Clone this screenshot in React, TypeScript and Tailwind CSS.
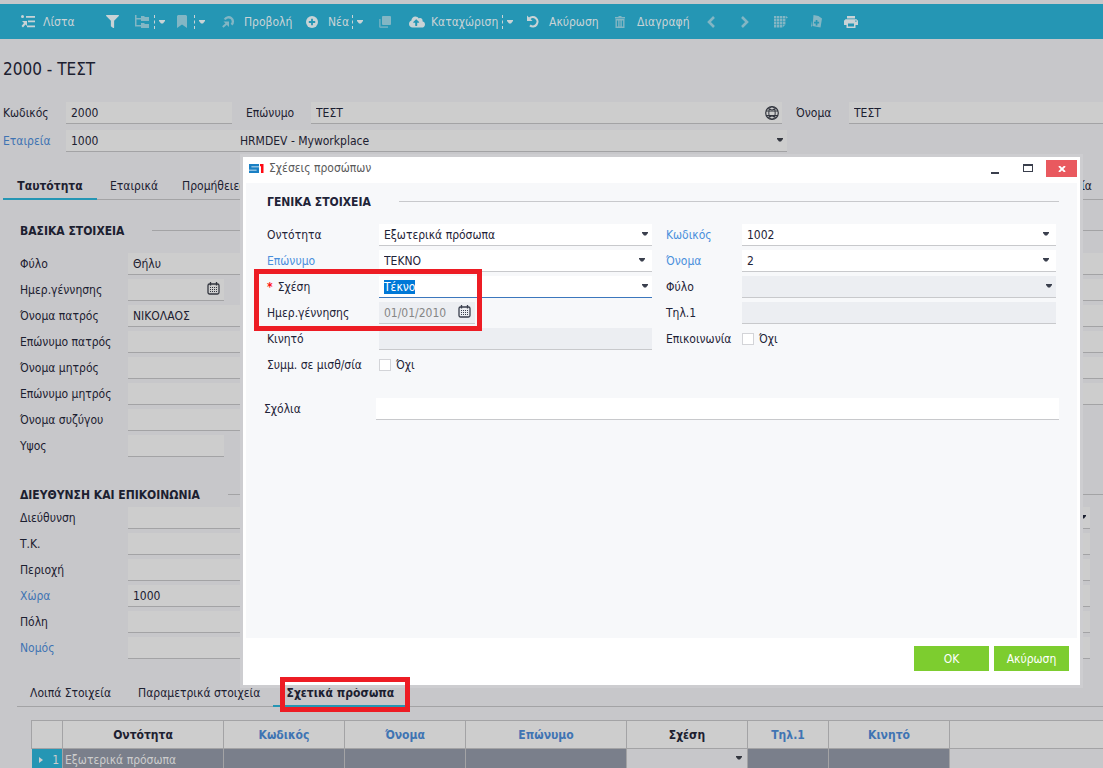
import { useEffect, useRef, ReactNode } from 'react';
import { FaCloudUploadAlt, FaFilter } from 'react-icons/fa';

function Caret({ className = '' }: { className?: string }) {
  return (
    <svg viewBox="0 0 6 4" className={`pointer-events-none h-1 w-[6px] ${className}`} fill="currentColor">
      <path d="M0 0h6v1L4 3.500H2L0 1z" />
    </svg>
  );
}

function ListIcon() {
  return (
    <svg viewBox="0 0 15 13" className="h-[13px] w-[15px]" fill="currentColor">
      <circle cx="1.500" cy="1.500" r="1.500" />
      <path d="M5 1h9v1.700H5zM7 5.500h7v1.700H7zM6 10.500h8v1.700H6zM1 6h5v5L4.500 9.500 2 12.500.5 11 3 8z" />
    </svg>
  );
}

function TreeIcon() {
  return (
    <svg viewBox="0 0 14 13" className="h-[13px] w-[14px]" fill="currentColor">
      <path d="M0 0h1.500v3H6V1h3l1 1h4v4H6V4.500H1.500V10H6V8h3l1 1h4v4H6v-1.500H0z" />
    </svg>
  );
}

function BookmarkIcon() {
  return (
    <svg viewBox="0 0 10 13" className="h-[13px] w-[10px]" fill="currentColor">
      <path d="M1 0h8l1 1v12l-5-3.500L0 13V1z" />
    </svg>
  );
}

function ViewIcon() {
  return (
    <svg viewBox="0 0 13 13" className="h-[13px] w-[13px]" fill="none" stroke="currentColor" strokeWidth="2.400">
      <path d="M2.800 4.500A4.300 4.300 0 1 1 9.500 9.700" />
      <path d="M.8 12l4-3.500" strokeWidth="2" />
      <path d="M1.500 6.500H7V12L5.200 10.200z" fill="currentColor" stroke="none" />
    </svg>
  );
}

function PlusIcon() {
  return (
    <svg viewBox="0 0 12 12" className="h-3 w-3">
      <circle cx="6" cy="6" r="6" fill="currentColor" />
      <path d="M6 2.800v6.400M2.800 6h6.400" stroke="#2596b4" strokeWidth="1.800" />
    </svg>
  );
}

function CopyIcon() {
  return (
    <svg viewBox="0 0 12 12" className="h-3 w-3" fill="currentColor">
      <rect x="3" y="0" width="9" height="9" rx="1" />
      <path d="M0 3h1.700v7.300H9V12H1l-1-1z" opacity=".7" />
    </svg>
  );
}

function UndoIcon() {
  return (
    <svg viewBox="0 0 13 13" className="h-[13px] w-[13px]" fill="none" stroke="currentColor" strokeWidth="2.200">
      <path d="M2.500 3.600A4.600 4.600 0 1 1 3 10.300" />
      <path d="M0 .5V6h5.500z" fill="currentColor" stroke="none" />
    </svg>
  );
}

function TrashIcon() {
  return (
    <svg viewBox="0 0 10 12" className="h-3 w-[10px]" fill="none" stroke="currentColor" strokeWidth="1.400">
      <path d="M0 1.700h10M3.500 .7h3" />
      <path d="M1.200 3.700h7.600v7.600H1.200zM3.900 4v7M6.100 4v7" />
    </svg>
  );
}

function ChevronIcon({ right }: { right?: boolean }) {
  return (
    <svg viewBox="0 0 8 12" className="h-3 w-2" fill="none" stroke="currentColor" strokeWidth="2.600">
      <path d={right ? 'M1 1l5 5-5 5' : 'M7 1L2 6l5 5'} />
    </svg>
  );
}

function GridIcon() {
  return (
    <svg viewBox="0 0 14 12" className="h-3 w-[14px]" fill="currentColor">
      <path d="M0 0h2.400v2.400H0zM3 0h2.400v2.400H3zM6 0h2.400v2.400H6zM9 0h2.400v2.400H9zM12 0l2 1.500-2 1zM0 3h2.400v2.400H0zM3 3h2.400v2.400H3zM6 3h2.400v2.400H6zM9 3h2.400v2.400H9zM0 6h2.400v2.400H0zM3 6h2.400v2.400H3zM6 6h2.400v2.400H6zM9 6h2.400v2.400H9zM0 9h2.400v2.400H0zM3 9h2.400v2.400H3zM6 9h2.400v2.400H6zM9 9l2 0-2 2z" />
    </svg>
  );
}

function CardsIcon() {
  return (
    <svg viewBox="0 0 11 13" className="h-[13px] w-[11px]" fill="currentColor">
      <path fillRule="evenodd" d="M2.500 0l5 1L11 3.500 9.500 12.500 1.500 11zM4.700 5v1.800H3v1.800h1.700v1.800h1.700V8.600h1.700V6.800H6.400V5z" />
      <path d="M0 5.500v6h1z" />
    </svg>
  );
}

function PrintIcon() {
  return (
    <svg viewBox="0 0 14 12" className="h-3 w-[14px]" fill="currentColor">
      <path d="M3 0h8v2.500H3z" />
      <path fillRule="evenodd" d="M1.500 3.300h11L14 4.800V9h-2.500v3h-9V9H0V4.800zM4 7.500v3h6v-3zM11.300 4.500v1.200h1.200V4.500z" />
    </svg>
  );
}

function CalendarIcon() {
  return (
    <svg viewBox="0 0 13 13" className="pointer-events-none h-[13px] w-[13px]" fill="none" stroke="currentColor">
      <rect x="1" y="2" width="11" height="10" rx="1.500" strokeWidth="1.300" />
      <path d="M3.500 0v3.500M9.500 0v3.500" strokeWidth="1.300" />
      <path d="M3 5.500h7M3 7.500h7M3 9.500h7" strokeDasharray="1 1" />
    </svg>
  );
}

function GlobeIcon() {
  return (
    <svg viewBox="0 0 14 14" className="pointer-events-none h-[14px] w-[14px]" fill="none" stroke="currentColor">
      <circle cx="7" cy="7" r="6.300" strokeWidth="1.200" />
      <ellipse cx="7" cy="7" rx="3.200" ry="6.300" />
      <path d="M1 5h12M1 9.500h12M2.500 2.500q4.500 3 9 0M2.500 11.500q4.500-3 9 0" />
    </svg>
  );
}

interface ToolItem {
  name: string;
  icon: ReactNode;
  width: string;
  label?: string;
  menu?: string;
  dim?: boolean;
}

const tools: ToolItem[] = [
  { name: 'list', icon: <ListIcon />, label: 'Λίστα', width: 'w-[85px]' },
  { name: 'filter', icon: <FaFilter size={13} />, width: 'w-[29px]' },
  { name: 'tree', icon: <TreeIcon />, width: 'w-[19px]', menu: 'w-[23px]', dim: true },
  { name: 'bookmark', icon: <BookmarkIcon />, width: 'w-[17px]', menu: 'w-[28px]', dim: true },
  { name: 'view', icon: <ViewIcon />, label: 'Προβολή', width: 'w-[84px]' },
  { name: 'new', icon: <PlusIcon />, label: 'Νέα', width: 'w-[46px]', menu: 'w-[27px]' },
  { name: 'copy', icon: <CopyIcon />, width: 'w-[30px]', dim: true },
  { name: 'save', icon: <FaCloudUploadAlt size={16} />, label: 'Καταχώριση', width: 'w-[93px]', menu: 'w-[25px]' },
  { name: 'undo', icon: <UndoIcon />, label: 'Ακύρωση', width: 'w-[88px]' },
  { name: 'delete', icon: <TrashIcon />, label: 'Διαγραφή', width: 'w-[92px]', dim: true },
  { name: 'previous', icon: <ChevronIcon />, width: 'w-[34px]', dim: true },
  { name: 'next', icon: <ChevronIcon right />, width: 'w-[33px]', dim: true },
  { name: 'grid', icon: <GridIcon />, width: 'w-[37px]', dim: true },
  { name: 'cards', icon: <CardsIcon />, width: 'w-[33px]', dim: true },
  { name: 'print', icon: <PrintIcon />, width: 'w-[20px]' },
];

function Toolbar() {
  return (
    <header className="flex h-[35px] items-center bg-[#2596b4] pl-[21px] text-[#c9d3d6]">
      {tools.map((t) => (
        <div key={t.name} className="flex flex-none items-center">
          <button type="button" aria-label={t.label ?? t.name} className={`flex items-center whitespace-nowrap ${t.width}`}>
            <span className={`flex w-[22px] flex-none ${t.dim || t.name === 'view' ? 'text-[#83b6c4]' : ''}`}>{t.icon}</span>
            {t.label}
          </button>
          {t.menu && (
            <button
              type="button"
              aria-label={`${t.name} menu`}
              className={`flex h-[14px] items-center border-l border-dashed border-[#c9d3d6] pl-1 ${t.menu}`}
            >
              <Caret />
            </button>
          )}
        </div>
      ))}
    </header>
  );
}

interface PageFieldProps {
  id: string;
  label: string;
  value?: string;
  link?: boolean;
  width?: string;
  icon?: ReactNode;
}

function PageField({ id, label, value = '', link, width = 'w-full', icon }: PageFieldProps) {
  return (
    <div className="flex h-[22px] items-center">
      <label htmlFor={id} className={`w-[108px] flex-none whitespace-nowrap ${link ? 'text-[#3f74b3]' : ''}`}>
        {label}
      </label>
      <div className={`relative ${width}`}>
        <input
          id={id}
          defaultValue={value}
          className="block h-[22px] w-full border-b border-[#a3a3a5] bg-[#cdcdcd] px-[5px] outline-none"
        />
        {icon && <span className="absolute top-[3px] right-1 text-[#33363f]">{icon}</span>}
      </div>
    </div>
  );
}

function SectionTitle({ children, line }: { children: ReactNode; line: string }) {
  return (
    <h2 className="flex h-[22px] items-center gap-7 font-bold whitespace-nowrap">
      {children}
      <span className={`mb-px h-px flex-1 ${line}`} />
    </h2>
  );
}

const basics: PageFieldProps[] = [
  { id: 'gender', label: 'Φύλο', value: 'Θήλυ' },
  { id: 'birth', label: 'Ημερ.γέννησης', width: 'w-[96px]', icon: <CalendarIcon /> },
  { id: 'father', label: 'Όνομα πατρός', value: 'ΝΙΚΟΛΑΟΣ' },
  { id: 'father-last', label: 'Επώνυμο πατρός' },
  { id: 'mother', label: 'Όνομα μητρός' },
  { id: 'mother-last', label: 'Επώνυμο μητρός' },
  { id: 'spouse', label: 'Όνομα συζύγου' },
  { id: 'height', label: 'Υψος', width: 'w-[96px]' },
];

const address: PageFieldProps[] = [
  { id: 'street', label: 'Διεύθυνση' },
  { id: 'zip', label: 'Τ.Κ.' },
  { id: 'area', label: 'Περιοχή' },
  { id: 'country', label: 'Χώρα', value: '1000', link: true },
  { id: 'city', label: 'Πόλη' },
  { id: 'prefecture', label: 'Νομός', link: true },
];

// blank inputs of the second column, mostly hidden behind the dialog
function BlankFields({ count, name, className = '' }: { count: number; name: string; className?: string }) {
  return (
    <div className={`flex flex-col gap-1 ${className}`}>
      {Array.from({ length: count }, (_, i) => (
        <div key={i} className="relative">
          <input aria-label={`${name} ${i + 1}`} className="block h-[22px] w-full border-b border-[#a3a3a5] bg-[#cdcdcd]" />
          {name === 'contact' && i === 0 && <Caret className="absolute top-2 right-1" />}
        </div>
      ))}
    </div>
  );
}

function Tab({ children, active, className = '' }: { children: ReactNode; active?: boolean; className?: string }) {
  return (
    <button
      type="button"
      role="tab"
      aria-selected={!!active}
      className={`-mb-px h-7 flex-none border-b-2 pt-[2px] whitespace-nowrap ${active ? 'border-[#2596b4] font-bold' : 'border-transparent'} ${className}`}
    >
      {children}
    </button>
  );
}

const columns = [
  { label: '', width: 'w-[31px]' },
  { label: 'Οντότητα', width: 'w-[161px]' },
  { label: 'Κωδικός', width: 'w-[121px]', link: true },
  { label: 'Όνομα', width: 'w-[121px]', link: true },
  { label: 'Επώνυμο', width: 'w-[161px]', link: true },
  { label: 'Σχέση', width: 'w-[121px]' },
  { label: 'Τηλ.1', width: 'w-[81px]', link: true },
  { label: 'Κινητό', width: 'w-[121px]', link: true },
  { label: '', width: '' },
];

function RelatedTable() {
  return (
    <table className="w-full table-fixed border-collapse">
      <thead>
        <tr className="h-7 bg-[#cdcdcd]">
          {columns.map((c, i) => (
            <th
              key={i}
              className={`border border-[#a3a3a5] p-0 text-center font-bold last:border-r-0 ${c.width} ${c.link ? 'text-[#3f74b3]' : ''}`}
            >
              {c.label}
            </th>
          ))}
        </tr>
      </thead>
      <tbody>
        <tr className="h-[22px] bg-[#7a7f8b] text-[#cdcdcd]">
          <td className="bg-[#2596b4] p-0">
            <div className="flex items-center justify-between pr-[3px] pl-[7px]">
              <svg viewBox="0 0 4 6" className="h-[6px] w-1" fill="currentColor">
                <path d="M0 0l4 3-4 3z" />
              </svg>
              1
            </div>
          </td>
          <td className="border-x border-[#a3a3a5] p-0 pl-[2px]">Εξωτερικά πρόσωπα</td>
          <td className="border-x border-[#a3a3a5]" />
          <td className="border-x border-[#a3a3a5]" />
          <td className="border-x border-[#a3a3a5]" />
          <td className="bg-[#c7c7ca] p-0 text-[#33363f]">
            <Caret className="mr-[5px] mb-1 ml-auto block" />
          </td>
          <td className="border-x border-[#a3a3a5]" />
          <td className="border-x border-[#a3a3a5]" />
          <td className="bg-[#c7c7ca]" />
        </tr>
      </tbody>
    </table>
  );
}

interface DialogFieldProps {
  id: string;
  label: string;
  value?: string;
  link?: boolean;
  required?: boolean;
  disabled?: boolean;
  select?: boolean;
  labelWidth: string;
}

function DialogField({ id, label, value = '', link, required, disabled, select, labelWidth }: DialogFieldProps) {
  const ref = useRef<HTMLInputElement>(null);

  useEffect(() => {
    if (required && ref.current) {
      ref.current.focus();
      ref.current.select();
    }
  }, [required]);

  const box = `block h-[22px] w-full appearance-none border-b px-[5px] outline-none ${
    required ? 'border-[#3c77bd]' : 'border-[#c8c9cc]'
  } ${disabled ? 'bg-[#eceef2] text-[#868686]' : 'bg-white'}`;

  return (
    <div className="flex h-[22px] items-center">
      <label htmlFor={id} className={`flex-none whitespace-nowrap ${labelWidth} ${link ? 'text-[#4a8fdc]' : ''}`}>
        {required && <span className="mr-[5px] font-bold text-[#ff1010]">*</span>}
        {label}
      </label>
      <div className="relative flex-1">
        {select && !required ? (
          <select id={id} defaultValue={value} disabled={disabled} className={`${box} opacity-100`}>
            <option>{value}</option>
          </select>
        ) : (
          <input
            ref={ref}
            id={id}
            defaultValue={value}
            disabled={disabled}
            className={`${box} selection:bg-[#0078d7] selection:text-white`}
          />
        )}
        {select && <Caret className={`absolute top-2 text-[#3a3f4d] ${link ? 'right-[7px]' : 'right-1'}`} />}
      </div>
    </div>
  );
}

function CheckField({ id, label, labelWidth }: { id: string; label: string; labelWidth: string }) {
  return (
    <div className="flex h-[22px] items-center">
      <span className={`flex-none whitespace-nowrap ${labelWidth}`}>{label}</span>
      <input id={id} type="checkbox" className="mr-[5px] h-3 w-3 appearance-none border border-[#d3d4d8] bg-white" />
      <label htmlFor={id}>Όχι</label>
    </div>
  );
}

function RelationDialog() {
  return (
    <section
      role="dialog"
      aria-label="Σχέσεις προσώπων"
      className="absolute top-[154px] right-5 left-[240px] border-[3px] border-[#cdcdd0] bg-white px-[3px] text-[#1f2438]"
    >
      <div className="flex h-[26px] items-start">
        <svg viewBox="0 0 15 9" className="mt-[7px] ml-[3px] h-[9px] w-[15px]" fill="none">
          <path d="M10 1.300H1.200v3.200h7.600v3.200H0" stroke="#1a80c4" strokeWidth="2.400" />
          <path d="M11 0h3.500v8.900H12V2.300h-1z" fill="#ff0a14" />
        </svg>
        <h1 className="mt-[2px] ml-[5px] text-[#5a5a5a]">Σχέσεις προσώπων</h1>
        <div className="mt-[3px] ml-auto flex text-[#3a3f4d]">
          <button type="button" aria-label="minimize" className="flex h-[17px] w-[33px] items-center justify-center">
            <span className="mt-2 mr-1 h-[2px] w-2 bg-current" />
          </button>
          <button type="button" aria-label="maximize" className="flex h-[17px] w-[33px] items-center justify-center">
            <span className="mr-1 mb-px h-2 w-[10px] border border-t-2 border-current" />
          </button>
          <button type="button" aria-label="close" className="flex h-[17px] w-[31px] items-center justify-center bg-[#e9595f] text-white">
            <svg viewBox="0 0 8 6" className="h-[6px] w-2" stroke="currentColor" strokeWidth="1.800">
              <path d="M1 0l6 6M7 0L1 6" />
            </svg>
          </button>
        </div>
      </div>

      <div className="h-[455px] bg-[#f7f8fa] pt-2 pr-[18px] pl-[21px]">
        <SectionTitle line="bg-[#c8c9cc]">ΓΕΝΙΚΑ ΣΤΟΙΧΕΙΑ</SectionTitle>
        <div className="mt-[11px] mr-[3px] grid grid-cols-[385fr_390fr] gap-x-[14px]">
          <div className="flex flex-col gap-1">
            <DialogField id="d-entity" label="Οντότητα" value="Εξωτερικά πρόσωπα" select labelWidth="w-[112px]" />
            <DialogField id="d-last" label="Επώνυμο" value="ΤΕΚΝΟ" link select labelWidth="w-[112px]" />
            <DialogField id="d-relation" label="Σχέση" value="Τέκνο" required select labelWidth="w-[112px]" />
            <div className="flex h-[22px] items-center">
              <label htmlFor="d-birth" className="w-[112px] flex-none">Ημερ.γέννησης</label>
              <div className="relative w-[96px]">
                <input
                  id="d-birth"
                  disabled
                  defaultValue="01/01/2010"
                  className="block h-[22px] w-full border-b border-[#c8c9cc] bg-[#eceef2] px-[5px] text-[#868686]"
                />
                <span className="absolute top-[3px] right-1 text-[#3a3f4d]">
                  <CalendarIcon />
                </span>
              </div>
            </div>
            <DialogField id="d-mobile" label="Κινητό" disabled labelWidth="w-[112px]" />
            <CheckField id="d-payroll" label="Συμμ. σε μισθ/σία" labelWidth="w-[112px]" />
          </div>
          <div className="flex flex-col gap-1">
            <DialogField id="d-code" label="Κωδικός" value="1002" link select labelWidth="w-[76px]" />
            <DialogField id="d-first" label="Όνομα" value="2" link select labelWidth="w-[76px]" />
            <DialogField id="d-gender" label="Φύλο" disabled select labelWidth="w-[76px]" />
            <DialogField id="d-phone" label="Τηλ.1" disabled labelWidth="w-[76px]" />
            <CheckField id="d-contact" label="Επικοινωνία" labelWidth="w-[76px]" />
          </div>
        </div>
        <div className="mt-[22px] -ml-[3px]">
          <DialogField id="d-notes" label="Σχόλια" labelWidth="w-[112px]" />
        </div>
      </div>

      <div className="flex h-[47px] justify-end gap-[5px] pt-2 pr-2 text-white">
        <button type="button" className="h-[25px] w-[75px] bg-[#7dcd2f]">OK</button>
        <button type="button" className="h-[25px] w-[75px] bg-[#7dcd2f]">Ακύρωση</button>
      </div>

      {/* marker around the relation and birth date rows */}
      <div className="pointer-events-none absolute top-[112px] left-[11px] h-[62px] w-[228px] border-[5px] border-[#ed1c24]" />
    </section>
  );
}

export default function App() {
  return (
    <div className="relative h-screen overflow-hidden bg-[#c7c7ca] pt-1 font-['DejaVu_Sans_Condensed','Noto_Sans',sans-serif] text-[12px] leading-[18px] text-[#1c2030]">
      <Toolbar />
      <h1 className="flex h-[60px] items-center pl-[3px] text-[17px]">2000 - ΤΕΣΤ</h1>

      <div className="mt-[3px] flex h-[22px] items-center pl-[3px]">
        <label htmlFor="code" className="w-[63px] flex-none">Κωδικός</label>
        <input id="code" defaultValue="2000" className="h-[22px] w-[166px] border-b border-[#a3a3a5] bg-[#cdcdcd] px-[5px]" />
        <label htmlFor="last" className="ml-[14px] w-[65px] flex-none">Επώνυμο</label>
        <div className="relative flex-[471]">
          <input id="last" defaultValue="ΤΕΣΤ" className="block h-[22px] w-full border-b border-[#a3a3a5] bg-[#cdcdcd] px-[5px]" />
          <span className="absolute top-1 right-[3px] text-[#33363f]">
            <GlobeIcon />
          </span>
        </div>
        <label htmlFor="first" className="ml-[14px] w-[53px] flex-none">Όνομα</label>
        <div className="flex-[254]">
          <input id="first" defaultValue="ΤΕΣΤ" className="block h-[22px] w-full border-b border-[#a3a3a5] bg-[#cdcdcd] px-[5px]" />
        </div>
      </div>
      <div className="mt-[6px] mr-[316px] flex h-[22px] items-center pl-[3px]">
        <label htmlFor="company" className="w-[63px] flex-none text-[#3f74b3]">Εταιρεία</label>
        <input id="company" defaultValue="1000" className="h-[22px] w-[169px] border-b border-[#a3a3a5] bg-[#cdcdcd] px-[5px]" />
        <div className="relative flex-1">
          <select aria-label="Εταιρεία" className="block h-[22px] w-full appearance-none border-b border-[#a3a3a5] bg-[#cdcdcd] px-[5px]">
            <option>HRMDEV - Myworkplace</option>
          </select>
          <Caret className="absolute top-2 right-1 text-[#33363f]" />
        </div>
      </div>

      <nav role="tablist" className="mt-5 ml-[3px] flex h-7 border-b border-[#a3a3a5]">
        <Tab active className="w-[94px]">Ταυτότητα</Tab>
        <Tab className="ml-[13px]">Εταιρικά</Tab>
        <Tab className="ml-6">Προμήθειες</Tab>
        <Tab className="mr-[11px] ml-auto">Στοιχεία</Tab>
      </nav>

      <div className="mt-5 grid grid-cols-2 gap-x-10 pl-5">
        <section>
          <SectionTitle line="bg-[#a3a3a5]">ΒΑΣΙΚΑ ΣΤΟΙΧΕΙΑ</SectionTitle>
          <div className="mt-[11px] flex flex-col gap-1">
            {basics.map((f) => (
              <PageField key={f.id} {...f} />
            ))}
          </div>
        </section>
        <section className="pt-[10px]">
          <div className="h-px bg-[#a3a3a5]" />
          <BlankFields count={6} name="detail" className="mt-[22px]" />
        </section>
        <section className="mt-[27px]">
          <SectionTitle line="bg-[#a3a3a5]">ΔΙΕΥΘΥΝΣΗ ΚΑΙ ΕΠΙΚΟΙΝΩΝΙΑ</SectionTitle>
          <div className="mt-px flex flex-col gap-1">
            {address.map((f) => (
              <PageField key={f.id} {...f} />
            ))}
          </div>
        </section>
        <section className="mt-[27px] pt-[10px]">
          <div className="h-px bg-[#a3a3a5]" />
          <BlankFields count={6} name="contact" className="mt-3 mr-[13px]" />
        </section>
      </div>

      <nav role="tablist" className="mt-5 ml-[17px] flex h-7 border-b border-[#a3a3a5]">
        <Tab className="ml-[13px]">Λοιπά Στοιχεία</Tab>
        <Tab className="ml-[27px]">Παραμετρικά στοιχεία</Tab>
        <div className="relative ml-[13px] w-[134px] flex-none">
          <Tab active className="w-full">Σχετικά πρόσωπα</Tab>
          {/* marker around the active tab */}
          <div className="pointer-events-none absolute -top-[2px] left-[7px] z-10 h-[35px] w-[130px] border-[5px] border-[#ed1c24]" />
        </div>
      </nav>

      <div className="mt-[13px] ml-[31px]">
        <RelatedTable />
      </div>

      <RelationDialog />
    </div>
  );
}
